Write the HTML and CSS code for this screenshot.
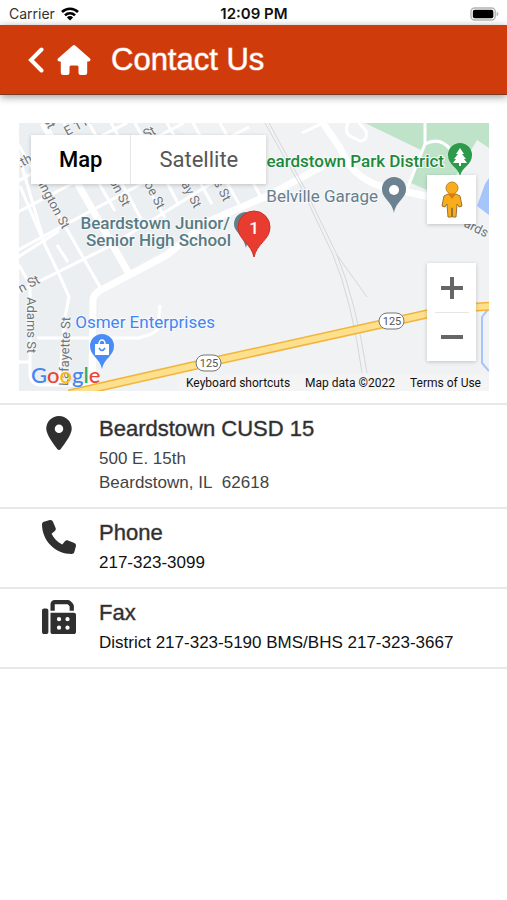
FILE: index.html
```html
<!DOCTYPE html>
<html lang="en">
  <head>
    <meta charset="UTF-8" />
    <meta name="viewport" content="width=device-width, initial-scale=1.0" />
    <title>Contact Us</title>
    <link rel="stylesheet" href="styles.css">
  </head>
  <body>
    <div class="status_bar">
      <div class="carrier">
        <span>Carrier</span>
        <svg class="wifi" viewBox="0 0 18 14">
          <path d="M1 5a11.500 11.500 0 0 1 16 0M4 8.300a7 7 0 0 1 10 0" fill="none" stroke="#000" stroke-width="2.600" />
          <path d="M9 13.600L5.900 10.400a4.400 4.400 0 0 1 6.200 0z" />
        </svg>
      </div>
      <div class="clock">12:09 PM</div>
      <div class="power">
        <svg class="battery" viewBox="0 0 31 15">
          <rect x="1" y="1" width="26" height="13" rx="4" fill="#fff" stroke="#b4b4b4" stroke-width="1.500" />
          <rect x="3" y="3" width="22" height="9" rx="2" />
          <path d="M28.500 5v5q2-1 2-2.500t-2-2.500z" fill="#b4b4b4" />
        </svg>
      </div>
    </div>

    <header class="header">
      <button class="back" type="button" aria-label="Back">
        <svg viewBox="0 0 16 26"><path d="M13.500 2.500L3 13l10.500 10.500" /></svg>
      </button>
      <a class="home" href="#" aria-label="Home">
        <svg viewBox="0 0 34 30">
          <path d="M15.800.6q1.200-1 2.400 0L33 13.600q1.500 2.400-1.500 3h-1.300V27.500q0 2.500-2.500 2.500h-4q-2.200 0-2.200-2.200V22q0-1.500-1.500-1.500h-6q-1.500 0-1.500 1.500v5.800q0 2.200-2.200 2.200h-4q-2.500 0-2.500-2.500V16.600H2.500q-3-.6-1.500-3z" />
        </svg>
      </a>
      <h1>Contact Us</h1>
    </header>

    <main>
      <section class="map_wrap">
        <div class="map">
          <svg class="map_canvas" viewBox="0 0 470 268" preserveAspectRatio="xMidYMid slice">
            <rect width="470" height="268" fill="#f0f2f4" />
            <path d="M0 0H150L245 70 80 165 75 268H0z" fill="#eceff1" />

            <!-- park and water -->
            <path d="M346 0H470V25L458 17 436 54 410 68 392 60 404 28z" fill="#bfe3c9" />
            <path d="M458 83l8-22 4-6v37z" fill="#a5c5fb" />
            <path d="M470 185l-7 9v46l7 8" fill="none" stroke="#a5c5fb" stroke-width="2" />

            <!-- streets -->
            <g class="street">
              <path d="M-1 30L26 122 39 149 50 174 46 194 40 262" />
              <path d="M1 63L26 122M-13 0L81 164M38 122l11 17M45 0L96 88" />
              <path d="M70 0L122 96M92 0L146 95M116 0L160 82M148 0L193 81M174 0L220 81M201 0L243 76" />
              <path d="M-1 89L60 57 130 18 165 0M-1 127L109 68 180 30 230 4M-1 58L80 14 108 0" />
              <path d="M-1 169L39 149 93 122 188 63 244 34M-1 134L40 108" />
              <path d="M0 142L11 162V250q0 11 10 12H70M18 215H119q18-4 20-10l2-23M0 239H11" />
              <path d="M283 10L304 0M329 0q-4 9 2 13l10 5q8 0 6-10L340 0" />
              <path d="M406 0V21L388 66M406 21q15-8 26 6" />
            </g>
            <g class="street wide">
              <path d="M24 0L109 149M73 268L74 178q0-7 8-11L148 132 188 99 248 73 304 43" />
              <path d="M304 0L321 25Q333 54 361 63L420 76" />
            </g>

            <!-- railway -->
            <path class="rail" d="M246 0L281 62 314 132Q333 178 343 250M250 0L284 62 318 132Q337 178 348 250M318 132L348 174" />

            <!-- route 125 -->
            <path class="route_edge" d="M50 271L191 239 408 191Q438 184 474 183" />
            <path class="route" d="M50 271L191 239 408 191Q438 184 474 183" />
            <g class="shield">
              <rect x="177" y="232" width="25" height="16" rx="8" />
              <text x="190" y="244">125</text>
              <rect x="360" y="190" width="25" height="16" rx="8" />
              <text x="373" y="202">125</text>
            </g>

            <g class="street_name">
              <text transform="translate(24 -4) rotate(62)">St</text>
              <text transform="translate(48 13) rotate(-28)">E 11th</text>
              <text transform="translate(127 16) rotate(-28)">St</text>
              <text transform="translate(1 45) rotate(-28)">.th</text>
              <text transform="translate(16 55) rotate(62)">hington St</text>
              <text transform="translate(90 58) rotate(62)">on St</text>
              <text transform="translate(125 61) rotate(62)">oe St</text>
              <text transform="translate(162 61) rotate(62)">ay St</text>
              <text transform="translate(193 57) rotate(62)">is St</text>
              <text transform="translate(2 170) rotate(-28)">n St</text>
              <text transform="translate(8 174) rotate(90)">Adams St</text>
              <text transform="translate(49 263) rotate(-88)">Lafayette St</text>
              <text transform="translate(444 103) rotate(27)">ards</text>
            </g>

            <g class="place">
              <text class="school" x="211" y="106">Beardstown Junior/</text>
              <text class="school" x="212" y="123">Senior High School</text>
              <text class="garage" x="359" y="79">Belville Garage</text>
              <text class="park" x="425" y="44">Beardstown Park District</text>
              <text class="shop" x="196" y="205">Osmer Enterprises</text>
            </g>

            <!-- pins -->
            <g transform="translate(227 125)" fill="#60808a">
              <path d="M0 0C-3-14-12-16-12-24a12 12 0 0 1 24 0C12-16 3-14 0 0z" />
            </g>
            <g transform="translate(235 134)">
              <path d="M0 0C-3-14-16-17-16-30a16 16 0 0 1 32 0C16-17 3-14 0 0z" fill="#e93c31" stroke="#cf2f27" />
              <text class="pin_text" y="-23">1</text>
            </g>
            <g transform="translate(375 90)">
              <path d="M0 0C-2-12-12-14-12-24a12 12 0 0 1 24 0C12-14 2-12 0 0z" fill="#6c8290" />
              <circle cy="-23" r="5" fill="#fff" />
            </g>
            <g transform="translate(441 53)">
              <path d="M0 0C-2-9-12-11-12-21a12 12 0 0 1 24 0C12-11 2-9 0 0z" fill="#2c9a48" />
              <path d="M0-28l4 6h-2l4 5h-2l3 4H1v3h-2v-3h-6l3-4h-2l4-5h-2z" fill="#fff" />
            </g>
            <g transform="translate(83 246)">
              <path d="M0 0C-2-11-12-13-12-23a12 12 0 0 1 24 0C12-13 2-11 0 0z" fill="#4a8cf5" />
              <path d="M-7-25H7v11H-7z" fill="#fff" />
              <path d="M-3-25a3 4 0 0 1 6 0" fill="none" stroke="#fff" stroke-width="1.500" />
              <path d="M-3-21q3 5 6 0" fill="none" stroke="#4a8cf5" stroke-width="1.500" />
            </g>
          </svg>

          <div class="map_type">
            <button class="active" type="button">Map</button>
            <button type="button">Satellite</button>
          </div>

          <div class="map_tools">
            <button class="tool" type="button" aria-label="Street View">
              <svg class="pegman" viewBox="0 0 22 38">
                <path d="M7 13h8l4 2 2 10-3 1-2-3-1 13h-3.500v-9h-1v9H7L6 23l-2 3-3-1 2-10z" fill="#f8ae1c" stroke="#9a7430" />
                <circle cx="11" cy="7" r="6" fill="#f8ae1c" stroke="#b8862b" />
                <path d="M7 13h8l-4 5z" fill="#df7a12" />
              </svg>
            </button>
            <div class="zoom">
              <button class="tool" type="button" aria-label="Zoom in">
                <svg viewBox="0 0 22 22"><path d="M0 11h22M11 0v22" /></svg>
              </button>
              <button class="tool" type="button" aria-label="Zoom out">
                <svg viewBox="0 0 22 22"><path d="M0 11h22" /></svg>
              </button>
            </div>
          </div>

          <div class="google"><span class="blue">G</span><span class="red">o</span><span class="yellow">o</span><span class="blue">g</span><span class="green">l</span><span class="red">e</span></div>
          <div class="map_footer">
            <button type="button">Keyboard shortcuts</button>
            <span>Map data ©2022</span>
            <a href="#">Terms of Use</a>
          </div>
        </div>
      </section>

      <ul class="contact_list">
        <li>
          <svg class="icon" viewBox="0 0 384 512">
            <path d="M215.700 499.200C267 435 384 279.400 384 192C384 86 298 0 192 0S0 86 0 192c0 87.400 117 243 168.300 307.200c12.300 15.300 35.100 15.300 47.400 0zM192 128a64 64 0 1 1 0 128 64 64 0 1 1 0-128z" />
          </svg>
          <div class="info">
            <h2>Beardstown CUSD 15</h2>
            <p class="address">500 E. 15th<br>Beardstown, IL&nbsp; 62618</p>
          </div>
        </li>
        <li>
          <svg class="icon" viewBox="0 0 512 512">
            <path d="M164.900 24.600c-7.700-18.600-28-28.500-47.400-23.200l-88 24C12.100 30.200 0 46 0 64C0 311.400 200.600 512 448 512c18 0 33.800-12.100 38.600-29.500l24-88c5.300-19.400-4.600-39.700-23.200-47.400l-96-40c-16.300-6.800-35.200-2.100-46.300 11.600L304.700 368C234.300 334.700 177.300 277.700 144 207.300L193.300 167c13.700-11.200 18.400-30 11.600-46.300l-40-96z" />
          </svg>
          <div class="info">
            <h2>Phone</h2>
            <p>217-323-3099</p>
          </div>
        </li>
        <li>
          <svg class="icon" viewBox="0 0 512 512">
            <path d="M128 64v96h64V64H386.700L416 93.300V160h64V93.300c0-17-6.700-33.300-18.700-45.300L432 18.700C420 6.700 403.700 0 386.700 0H192c-35.300 0-64 28.700-64 64zM0 160V480c0 17.700 14.300 32 32 32H64c17.700 0 32-14.300 32-32V160c0-17.700-14.300-32-32-32H32c-17.700 0-32 14.300-32 32zm480 32H128V480c0 17.700 14.300 32 32 32H480c17.700 0 32-14.300 32-32V224c0-17.700-14.300-32-32-32zM256 256a32 32 0 1 1 0 64 32 32 0 1 1 0-64zm96 32a32 32 0 1 1 64 0 32 32 0 1 1-64 0zm32 96a32 32 0 1 1 0 64 32 32 0 1 1 0-64zM224 416a32 32 0 1 1 64 0 32 32 0 1 1-64 0z" />
          </svg>
          <div class="info">
            <h2>Fax</h2>
            <p>District 217-323-5190 BMS/BHS 217-323-3667</p>
          </div>
        </li>
      </ul>
    </main>
  </body>
</html>
```

FILE: styles.css
```css
* {
  margin: 0;
  padding: 0;
  box-sizing: border-box;
}
body {
  background-color: #fff;
  color: #111;
  font-family: "Liberation Sans", Arial, sans-serif;
}
button {
  border: none;
  background: none;
  font: inherit;
  color: inherit;
  cursor: pointer;
}
a {
  color: inherit;
  text-decoration: none;
}
svg {
  display: block;
}

.status_bar {
  display: grid;
  grid-template-columns: 1fr auto 1fr;
  align-items: center;
  height: 25px;
  padding: 2px 8px 0 9px;
  font-family: Inter, sans-serif;
  font-size: 14px;
  line-height: 20px;
}
.carrier {
  display: flex;
  align-items: center;
  gap: 6px;
  color: #333;
}
.wifi {
  width: 18px;
  height: 14px;
}
.clock {
  font-size: 15px;
  font-weight: 600;
}
.power {
  display: flex;
  justify-content: flex-end;
}
.battery {
  width: 29px;
  height: 14px;
}

.header {
  display: flex;
  align-items: center;
  height: 70px;
  padding: 0 28px;
  background-color: #d03b0b;
  border-bottom: 1px solid #7c3a22;
  box-shadow: 0 2px 8px rgba(0, 0, 0, 0.4);
  color: #fff;
}
.back svg {
  width: 16px;
  height: 26px;
  fill: none;
  stroke: #fff;
  stroke-width: 4;
  stroke-linecap: round;
}
.home {
  margin: 0 20px 0 13px;
}
.home svg {
  width: 34px;
  height: 30px;
  fill: #fff;
}
.header h1 {
  font-size: 31px;
  font-weight: 400;
  line-height: 40px;
  -webkit-text-stroke: 1px rgba(255, 255, 255, 0.5);
}

.map_wrap {
  padding: 28px 18px 12px 19px;
}
.map {
  position: relative;
  height: 268px;
  overflow: hidden;
  font-family: Roboto, sans-serif;
}
.map_canvas {
  width: 100%;
  height: 100%;
}
.street {
  fill: none;
  stroke: #fff;
  stroke-width: 3;
}
.wide {
  stroke-width: 7;
}
.rail {
  fill: none;
  stroke: #d5d7d9;
  stroke-width: 1;
}
.route_edge {
  fill: none;
  stroke: #f2b53a;
  stroke-width: 9;
}
.route {
  fill: none;
  stroke: #fde08d;
  stroke-width: 6;
}
.shield rect {
  fill: #fff;
  stroke: #777;
}
.shield text {
  fill: #555;
  font-size: 11px;
  text-anchor: middle;
}
.street_name {
  fill: #70757a;
  stroke: #f4f6f7;
  stroke-width: 2;
  paint-order: stroke;
  font-size: 13px;
}
.place {
  stroke: #f8f9fa;
  stroke-width: 2;
  paint-order: stroke;
  font-size: 17px;
  text-anchor: end;
}
.school {
  fill: #587b83;
  font-weight: 500;
}
.garage {
  fill: #667f8d;
}
.park {
  fill: #1d8a3b;
  font-weight: 500;
}
.shop {
  fill: #4285f4;
}
.pin_text {
  fill: #fff;
  font-size: 17px;
  font-weight: 500;
  text-anchor: middle;
}

.map_type {
  position: absolute;
  left: 12px;
  top: 12px;
  display: flex;
  height: 49px;
  background-color: #fff;
  box-shadow: 0 1px 4px rgba(0, 0, 0, 0.2);
  font-size: 22px;
  color: #565656;
}
.map_type button {
  padding: 0 28px;
}
.map_type .active {
  border-right: 1px solid #e6e6e6;
  font-weight: 500;
  color: #000;
}
.map_tools {
  position: absolute;
  right: 13px;
  bottom: 30px;
  display: flex;
  flex-direction: column;
  gap: 39px;
}
.tool {
  display: flex;
  align-items: center;
  justify-content: center;
  width: 49px;
  height: 49px;
}
.tool svg {
  width: 22px;
  height: 22px;
  stroke: #666;
  stroke-width: 4;
}
.map_tools > .tool,
.zoom {
  background-color: #fff;
  box-shadow: 0 1px 4px rgba(0, 0, 0, 0.2);
}
.tool .pegman {
  height: 38px;
  stroke: none;
  stroke-width: 1;
}
.zoom .tool + .tool {
  background: linear-gradient(#e6e6e6, #e6e6e6) center top / 34px 1px no-repeat;
}
.google {
  position: absolute;
  left: 12px;
  bottom: 2px;
  font-family: Lato, sans-serif;
  font-size: 22px;
  font-weight: 500;
  line-height: 28px;
}
.blue {
  color: #4285f4;
}
.red {
  color: #ea4335;
}
.yellow {
  color: #fbbc05;
}
.green {
  color: #34a853;
}
.map_footer {
  position: absolute;
  right: 0;
  bottom: 0;
  display: flex;
  gap: 15px;
  padding: 0 8px;
  background-color: rgba(245, 245, 245, 0.7);
  font-size: 12px;
  line-height: 16px;
  color: #111;
}

.contact_list {
  list-style: none;
  border-bottom: 2px solid #e8e8e8;
}
.contact_list li {
  display: flex;
  gap: 23px;
  padding: 8px 16px 12px 42px;
  border-top: 2px solid #e8e8e8;
}
.icon {
  flex: none;
  width: 34px;
  height: 34px;
  margin-top: 3px;
  fill: #2f2f2f;
}
.info h2 {
  margin-bottom: 2px;
  font-size: 22px;
  font-weight: 400;
  line-height: 32px;
  color: #2f2f2f;
  -webkit-text-stroke: 1px rgba(47, 47, 47, 0.4);
}
.info p {
  font-size: 17px;
  line-height: 24px;
}
.info .address {
  color: #444;
}
```
